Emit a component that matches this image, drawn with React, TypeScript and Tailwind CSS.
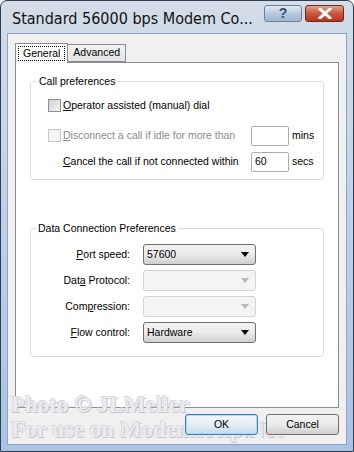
import React from 'react'

function Check({ disabled }: { disabled?: boolean }) {
  return (
    <span
      className={
        'inline-block w-[13px] h-[13px] border shrink-0 ' +
        (disabled
          ? 'border-[#c8c8c8] bg-[#f4f4f4]'
          : 'border-[#8e8f8f] bg-gradient-to-br from-[#cfcfcf] to-[#f7f7f7]')
      }
    />
  )
}

function Field({ value }: { value?: string }) {
  return (
    <div className="w-[38px] h-[20px] border border-[#abadb3] bg-white rounded-[2px] flex items-center pl-[3px] text-black">
      {value}
    </div>
  )
}

function Select({ value, disabled }: { value?: string; disabled?: boolean }) {
  return (
    <div
      className={
        'w-[113px] h-[21px] rounded-[3px] border flex items-center justify-between pl-[3px] pr-[6px] ' +
        (disabled
          ? 'border-[#d3d3d3] bg-[#f4f4f4]'
          : 'border-[#707070] bg-gradient-to-b from-[#f2f2f2] via-[#ebebeb] to-[#cfcfcf]')
      }
    >
      <span>{value}</span>
      <svg width="8" height="5" viewBox="0 0 8 5">
        <path d="M0 0h8L4 5z" fill={disabled ? '#b8b8b8' : '#000'} />
      </svg>
    </div>
  )
}

function Row({ label, children }: { label: React.ReactNode; children: React.ReactNode }) {
  return (
    <div className="flex items-center h-[21px]">
      <div className="w-[112px] text-right pr-[13px]">{label}</div>
      {children}
    </div>
  )
}

export default function App() {
  return (
    <div
      className="relative w-[354px] h-[452px] flex flex-col border border-[#2f3e50] rounded-t-[7px] bg-gradient-to-b from-[#d4dde8] via-[#bdd0e8] to-[#a9c3e6] text-[10.5px] text-black overflow-hidden"
      style={{ fontFamily: '"Liberation Sans", Arial, sans-serif' }}
    >
      {/* title bar */}
      <div className="h-[32px] flex items-center pl-[11px] pr-[9px] shrink-0">
        <div
          className="flex-1 min-w-0 overflow-hidden text-[16px] text-[#111] pt-[4px] whitespace-nowrap"
          style={{ fontFamily: '"DejaVu Sans Condensed", "DejaVu Sans", sans-serif', fontStretch: 'condensed' }}
        >
          Standard 56000 bps Modem Co...
        </div>
        <div className="flex gap-[3px] self-start mt-[4px] shrink-0">
          <div className="w-[38px] h-[17px] rounded-[3px] border border-[#6d7f95] bg-gradient-to-b from-[#e3ebf4] via-[#b7c9de] to-[#9fb6d0] flex items-center justify-center text-[#3a4e6a] font-bold text-[14px]">
            ?
          </div>
          <div className="w-[39px] h-[17px] rounded-[3px] border border-[#6b2a20] bg-gradient-to-b from-[#e3a08e] via-[#c65a3f] to-[#b8341a] flex items-center justify-center">
            <svg width="14" height="11" viewBox="0 0 14 11">
              <path d="M2 1l10 9M12 1L2 10" stroke="#fff" strokeWidth="3" strokeLinecap="square" />
            </svg>
          </div>
        </div>
      </div>

      {/* client area */}
      <div className="flex-1 mx-[6px] mb-[6px] bg-[#f0f0f0] border border-[#8ea4c0] flex flex-col px-[7px] pt-[8px]">
        <div className="flex items-end h-[20px]">
          <div className="h-[20px] px-[2px] pt-[2px] border border-b-0 border-[#898c95] bg-white relative z-10 -mb-px">
            <span className="inline-block border border-dotted border-black px-[4px] leading-[13px]">General</span>
          </div>
          <div className="h-[18px] px-[5px] flex items-center border border-l-0 border-[#898c95] bg-gradient-to-b from-[#f3f3f3] to-[#e3e3e3]">
            Advanced
          </div>
        </div>

        <div className="h-[346px] border border-[#898c95] bg-white px-[14px] pt-[11px]">
          <fieldset className="border border-[#d5dfe5] rounded-[3px] pl-[17px] pr-[8px] pb-[7px]">
            <legend className="px-[2px] -ml-[11px]">Call preferences</legend>
            <div className="flex items-center gap-[2px] mt-[8px]">
              <Check />
              <span>
                <u>O</u>perator assisted (manual) dial
              </span>
            </div>
            <div className="flex items-center mt-[12px]">
              <Check disabled />
              <span className="ml-[2px] text-[#8b8b8b] w-[188px]">
                <u>D</u>isconnect a call if idle for more than
              </span>
              <Field />
              <span className="ml-[3px]">mins</span>
            </div>
            <div className="flex items-center mt-[6px]">
              <span className="ml-[15px] w-[188px]">
                <u>C</u>ancel the call if not connected within
              </span>
              <Field value="60" />
              <span className="ml-[3px]">secs</span>
            </div>
          </fieldset>

          <fieldset className="mt-[41px] border border-[#d5dfe5] rounded-[3px] pb-[13px]">
            <legend className="px-[2px] ml-[5px]">Data Connection Preferences</legend>
            <div className="flex flex-col gap-[5px] mt-[8px]">
              <Row label={<><u>P</u>ort speed:</>}>
                <Select value="57600" />
              </Row>
              <Row label={<>Dat<u>a</u> Protocol:</>}>
                <Select disabled />
              </Row>
              <Row label={<>Com<u>p</u>ression:</>}>
                <Select disabled />
              </Row>
              <Row label={<><u>F</u>low control:</>}>
                <Select value="Hardware" />
              </Row>
            </div>
          </fieldset>
        </div>

        <div className="flex justify-end gap-[8px] mt-[6px] relative z-10">
          <div className="w-[73px] h-[21px] rounded-[3px] border border-[#3c7fb1] bg-gradient-to-b from-[#f2f8fc] via-[#e5eef5] to-[#c6dbea] shadow-[inset_0_0_0_1px_#a6dcf5] flex items-center justify-center">
            OK
          </div>
          <div className="w-[73px] h-[21px] rounded-[3px] border border-[#707070] bg-gradient-to-b from-[#f2f2f2] via-[#ebebeb] to-[#cfcfcf] flex items-center justify-center">
            Cancel
          </div>
        </div>
      </div>

      {/* watermark */}
      <div
        className="absolute left-[10px] top-[391px] text-[23px] leading-[25px] font-bold text-[#ebebef] pointer-events-none whitespace-nowrap"
        style={{
          fontFamily: '"Liberation Serif", serif',
          textShadow: '1px 1px 0 #c6c6cc, -1px -1px 0 #d8d8de',
        }}
      >
        <div>Photo © JLMeller</div>
        <div>For use on ModemHelp.Net</div>
      </div>
    </div>
  )
}
